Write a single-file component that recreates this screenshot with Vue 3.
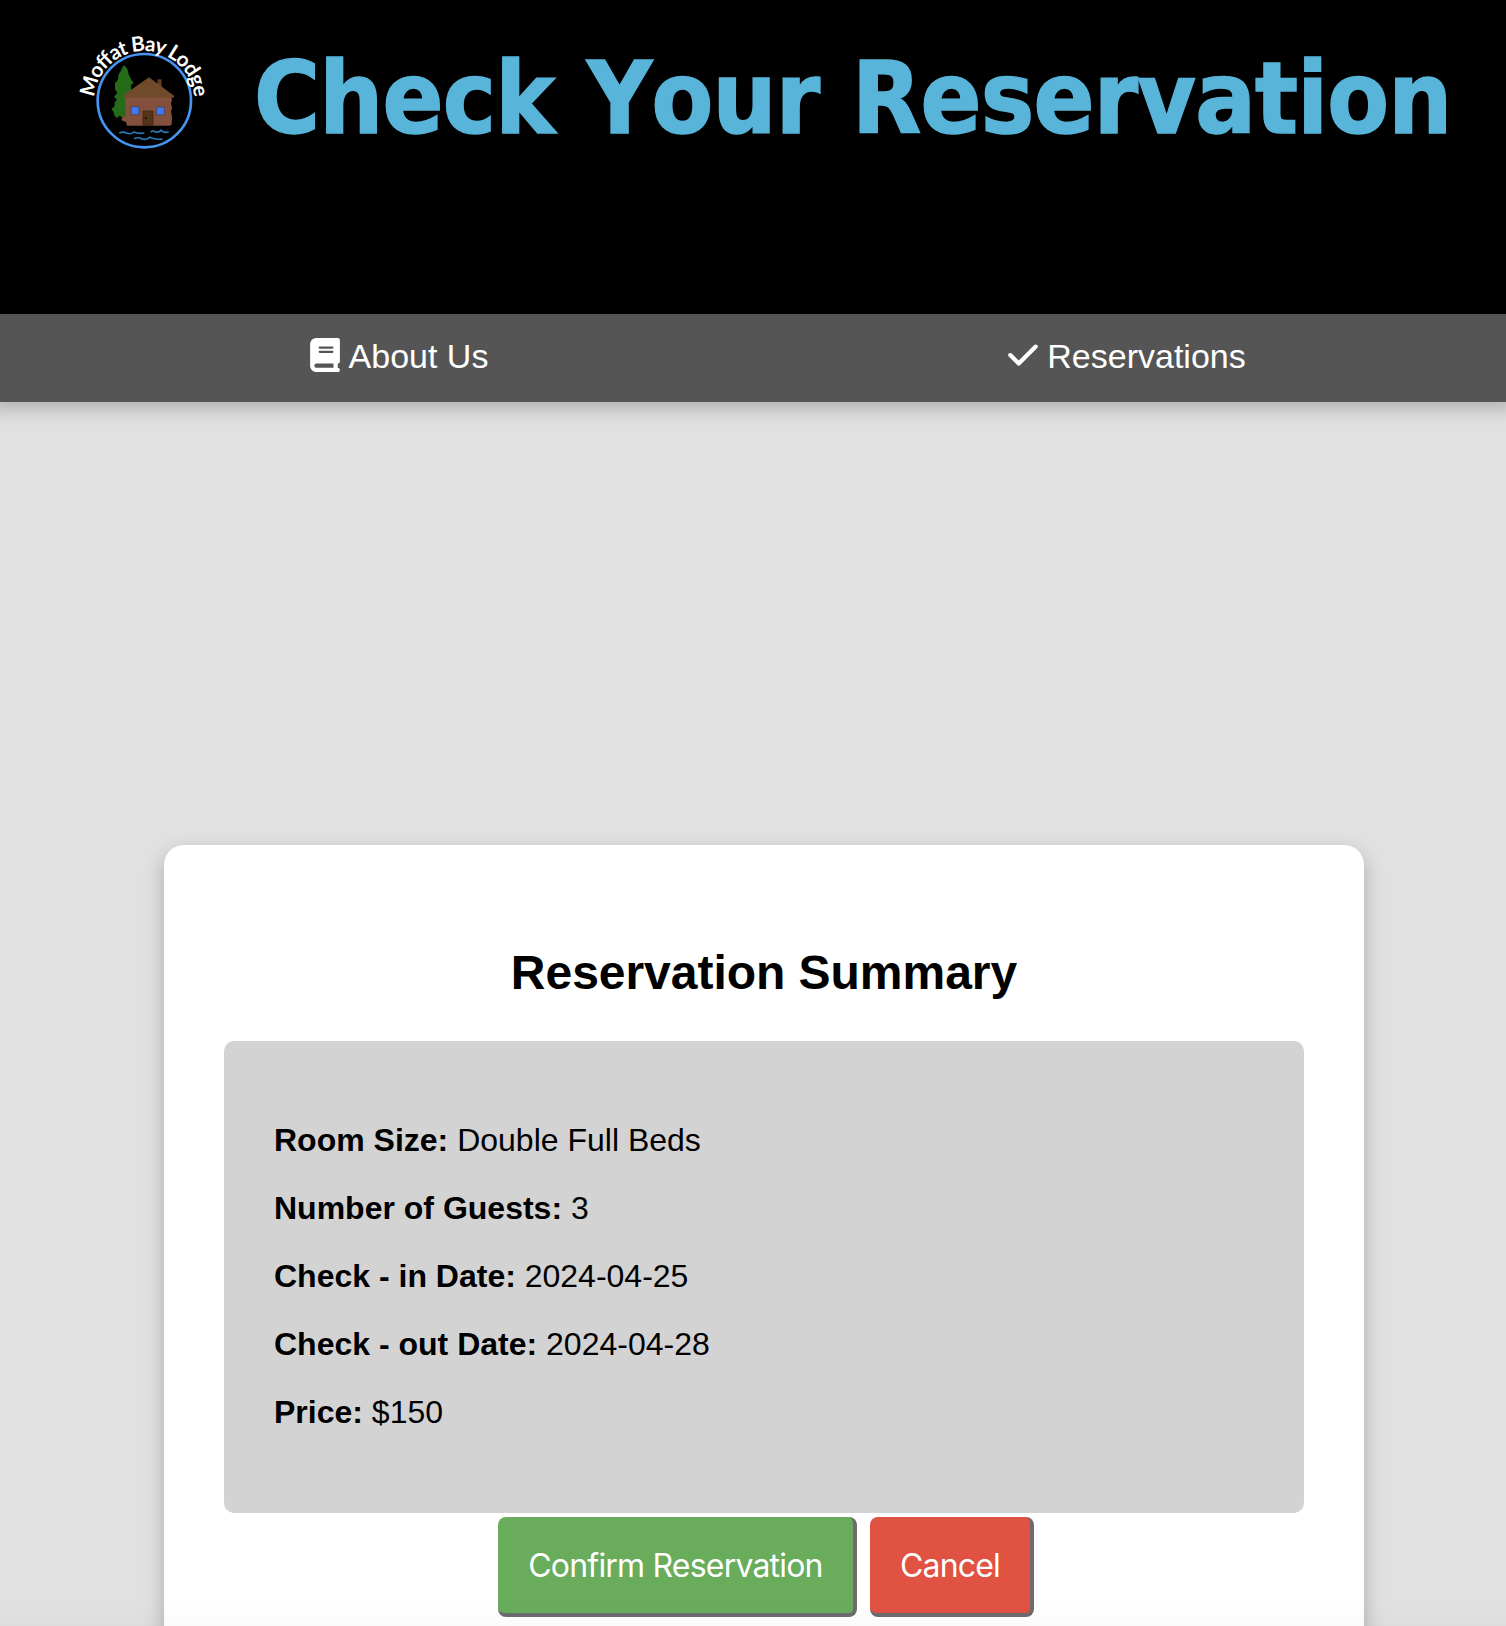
<script setup>
const details = [
  { label: 'Room Size:', value: 'Double Full Beds' },
  { label: 'Number of Guests:', value: '3' },
  { label: 'Check - in Date:', value: '2024-04-25' },
  { label: 'Check - out Date:', value: '2024-04-28' },
  { label: 'Price:', value: '$150' },
]
</script>

<template>
  <div class="page">
    <header class="header">
      <svg class="logo" width="170" height="150" viewBox="0 0 510 450">
        <defs>
          <path id="logo-arc" d="M103 243 A150 150 0 0 1 403 243 L403 300" />
        </defs>
        <circle cx="253" cy="242" r="140" fill="none" stroke="#4494f0" stroke-width="8" />
        <path fill="#266b18" d="M191 136 C200 140 205 153 206 164 L215 181 L221 190 L213 194 L214 210 L200 225 L198 292 L186 292 L179 287 L171 294 L163 287 L161 275 L154 268 L164 258 L163 248 L171 239 L162 230 L172 219 L165 208 L165 189 L174 180 L175 165 L181 155 Z" />
        <path fill="#65391f" d="M292 178h13v32h-13z" />
        <path fill="#82503d" d="M196 228 H333 L336 240 L333 250 L336 263 L333 274 L336 290 L335 314 L328 317 H201 L198 306 L184 301 L187 290 L196 290 Z" />
        <path fill="#704b29" d="M267 172 L343 228 L341 233 H191 L190 226 Z" />
        <g fill="#3f78f4" stroke="#46372f" stroke-width="2">
          <path d="M213 260h24v24h-24zM289 261h24v24h-24z" />
        </g>
        <path fill="#55351a" stroke="#362310" stroke-width="2" d="M249 273h30v43h-30z" />
        <circle cx="257" cy="295" r="3" fill="#150d05" />
        <g fill="none" stroke="#287dba" stroke-width="5">
          <path d="M178 339 Q190 333 201 340 Q213 344 222 336 Q235 342 253 339" />
          <path d="M272 336 Q279 330 287 336 Q298 338 303 331 Q310 340 326 336" />
          <path d="M222 356 Q235 350 246 357 Q258 361 269 352 Q285 360 307 357" />
        </g>
        <text class="logo-text" textLength="449"><textPath href="#logo-arc" startOffset="11">Moffat Bay Lodge</textPath></text>
      </svg>
      <h1 class="title">Check Your Reservation</h1>
    </header>

    <nav class="nav">
      <a class="nav-link">
        <svg class="nav-icon" viewBox="0 0 448 512"><path fill="currentColor" d="M96 0C43 0 0 43 0 96V416c0 53 43 96 96 96H384h32c17.700 0 32-14.300 32-32s-14.300-32-32-32V384c17.700 0 32-14.300 32-32V32c0-17.700-14.300-32-32-32H384 96zm0 384H352v64H96c-17.700 0-32-14.300-32-32s14.300-32 32-32zm32-240c0-8.800 7.200-16 16-16H336c8.800 0 16 7.200 16 16s-7.200 16-16 16H144c-8.800 0-16-7.200-16-16zm16 48H336c8.800 0 16 7.200 16 16s-7.200 16-16 16H144c-8.800 0-16-7.200-16-16s7.200-16 16-16z" /></svg>
        <span>About Us</span>
      </a>
      <a class="nav-link">
        <svg class="nav-icon" viewBox="0 0 448 512"><path fill="currentColor" d="M438.600 105.400c12.500 12.500 12.500 32.800 0 45.300l-256 256c-12.500 12.500-32.800 12.500-45.300 0l-128-128c-12.500-12.500-12.500-32.800 0-45.300s32.800-12.500 45.300 0L160 338.700 393.400 105.400c12.500-12.500 32.800-12.500 45.300 0z" /></svg>
        <span>Reservations</span>
      </a>
    </nav>

    <main class="card">
      <h2 class="card-title">Reservation Summary</h2>
      <section class="summary">
        <p v-for="item in details" :key="item.label"><strong>{{ item.label }}</strong> {{ item.value }}</p>
      </section>
      <div class="actions">
        <button class="button confirm">Confirm Reservation</button>
        <button class="button cancel">Cancel</button>
      </div>
    </main>
  </div>
</template>

<style>
body {
  margin: 0;
}
</style>

<style scoped>
.page {
  position: relative;
  box-sizing: border-box;
  height: 1626px;
  overflow: hidden;
  background: #e1e1e1;
  color: #000;
  font-family: "Liberation Sans", Arial, sans-serif;
}
.page::after {
  content: "";
  position: absolute;
  right: 0;
  bottom: 0;
  left: 0;
  height: 24px;
  background: linear-gradient(transparent, rgba(0, 0, 0, 0.02));
  pointer-events: none;
}
.header {
  display: flex;
  align-items: flex-start;
  box-sizing: border-box;
  height: 314px;
  padding: 20px 0 0 60px;
  background: #000;
}
.logo {
  flex: none;
  overflow: visible;
}
.logo-text {
  fill: #fff;
  font: 700 62px Lato, sans-serif;
}
.title {
  margin: 21px 0 0 24px;
  color: #58b4d9;
  font: 700 100px/116px "DejaVu Sans Condensed", "DejaVu Sans", sans-serif;
  font-stretch: condensed;
  font-kerning: none;
  letter-spacing: -0.8px;
  word-spacing: 2.3px;
  -webkit-text-stroke: 1.5px #58b4d9;
  white-space: nowrap;
}
.nav {
  display: flex;
  box-sizing: border-box;
  height: 88px;
  padding: 0 15px 0 35px;
  background: #555;
  box-shadow: 0 -2px 16px 10px rgba(0, 0, 0, 0.2);
}
.nav-link {
  display: flex;
  flex: 1;
  align-items: center;
  justify-content: center;
  gap: 9px;
  padding-bottom: 6px;
  color: #fff;
  font-size: 34px;
}
.nav-link span {
  padding-top: 3px;
}
.nav-icon {
  width: 30px;
  height: 34px;
}
.card {
  box-sizing: border-box;
  width: 1200px;
  height: 820px;
  margin: 443px 0 0 164px;
  padding: 100px 60px 0;
  border-radius: 20px;
  background: #fff;
  box-shadow: 0 8px 20px rgba(0, 0, 0, 0.25);
}
.card-title {
  margin: 0 0 40px;
  font-size: 48px;
  line-height: 56px;
  letter-spacing: -0.03px;
  text-align: center;
}
.summary {
  box-sizing: border-box;
  height: 472px;
  padding: 49px 50px;
  border-radius: 10px;
  background: #d3d3d3;
  font-size: 32px;
  line-height: 36px;
}
.summary p {
  margin: 32px 0;
}
.actions {
  display: flex;
  gap: 13px;
  padding: 4px 0 0 274px;
}
.button {
  box-sizing: border-box;
  height: 100px;
  padding: 0;
  border: 0 solid #6d6b6d;
  border-width: 0 4px 4px 0;
  border-radius: 8px;
  color: #fff;
  font: 400 32px Inter, sans-serif;
  letter-spacing: -0.8px;
  white-space: nowrap;
}
.confirm {
  width: 359px;
  background: #68ac5c;
}
.cancel {
  width: 164px;
  background: #e05241;
}
</style>
